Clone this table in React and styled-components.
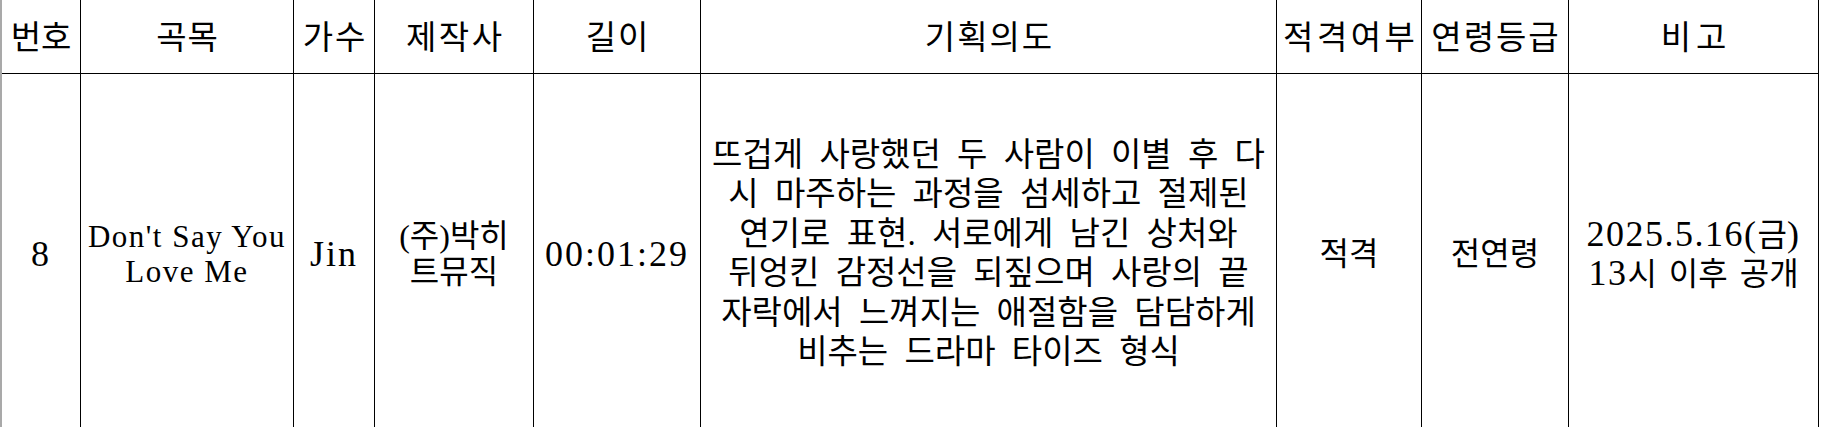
import React from "react";
import styled, { createGlobalStyle } from "styled-components";

const GlobalStyle = createGlobalStyle`
  html, body {
    margin: 0;
    padding: 0;
    overflow: hidden;
    background: #ffffff;
  }
  body {
    font-family: "Liberation Serif", "Noto Sans CJK KR", serif;
    color: #000000;
  }
`;

const COLUMNS = [79, 213, 81, 159, 167, 576, 145, 147, 250];

const Frame = styled.div`
  width: 1822px;
  height: 427px;
  box-sizing: border-box;
  border-left: 2px solid #a9a9a9;
  padding-right: 3px;
  overflow: hidden;
  background: #ffffff;
`;

const Table = styled.div`
  display: grid;
  grid-template-columns: ${COLUMNS.map((c) => `${c}px`).join(" ")};
  grid-template-rows: 74px 360px;
`;

const Cell = styled.div`
  box-sizing: border-box;
  border-right: 1px solid #000000;
  display: flex;
  flex-direction: column;
  align-items: center;
  justify-content: center;
  text-align: center;
  white-space: nowrap;
  font-family: "Liberation Serif", "Noto Sans CJK KR", serif;
  font-size: 32px;
  font-weight: 400;
  color: #000000;
`;

const HeadCell = styled(Cell)`
  border-bottom: 1px solid #000000;
  font-size: 33px;
  line-height: 40px;
  letter-spacing: ${(p) => (p.$ls === undefined ? 2 : p.$ls)}px;
  padding-top: 3px;
  padding-left: ${(p) => (p.$ls === undefined ? 2 : p.$ls)}px;
`;

const BodyCell = styled(Cell)`
  font-size: ${(p) => p.$size || 32}px;
  line-height: ${(p) => p.$lh || 38}px;
  word-spacing: ${(p) => p.$ws || 0}px;
`;

const Line = styled.span`
  display: block;
`;

const Latin = styled.span`
  font-family: "Liberation Serif", serif;
  font-size: ${(p) => p.$size || 36}px;
  letter-spacing: ${(p) => (p.$ls === undefined ? 2 : p.$ls)}px;
`;

const HEADERS = [
  { label: "번호", ls: 0 },
  { label: "곡목", ls: 1 },
  { label: "가수", ls: 2 },
  { label: "제작사", ls: 2.5 },
  { label: "길이", ls: 2 },
  { label: "기획의도", ls: 2 },
  { label: "적격여부", ls: 3.5 },
  { label: "연령등급", ls: 2 },
  { label: "비고", ls: 5 },
];

const PLAN = [
  "뜨겁게 사랑했던 두 사람이 이별 후 다",
  "시 마주하는 과정을 섬세하고 절제된",
  "연기로 표현. 서로에게 남긴 상처와",
  "뒤엉킨 감정선을 되짚으며 사랑의 끝",
  "자락에서 느껴지는 애절함을 담담하게",
  "비추는 드라마 타이즈 형식",
];

export default function App() {
  return (
    <>
      <GlobalStyle />
      <Frame>
        <Table>
          {HEADERS.map((h) => (
            <HeadCell key={h.label} $ls={h.ls}>
              {h.label}
            </HeadCell>
          ))}
          <BodyCell>
            <Latin>8</Latin>
          </BodyCell>
          <BodyCell $lh={34}>
            <Line>
              <Latin $size={31} $ls={1.5}>Don't Say You</Latin>
            </Line>
            <Line>
              <Latin $size={31} $ls={1.5}>Love Me</Latin>
            </Line>
          </BodyCell>
          <BodyCell>
            <Latin>Jin</Latin>
          </BodyCell>
          <BodyCell $lh={36}>
            <Line>(주)박히</Line>
            <Line>트뮤직</Line>
          </BodyCell>
          <BodyCell>
            <Latin>00:01:29</Latin>
          </BodyCell>
          <BodyCell $size={33} $lh={39.5} $ws={8}>
            {PLAN.map((l) => (
              <Line key={l}>{l}</Line>
            ))}
          </BodyCell>
          <BodyCell>적격</BodyCell>
          <BodyCell>전연령</BodyCell>
          <BodyCell $lh={38} $ws={4}>
            <Line>
              <Latin $ls={1.5}>2025.5.16(</Latin>금<Latin $ls={1.5}>)</Latin>
            </Line>
            <Line>
              <Latin $ls={1.5}>13</Latin>시 이후 공개
            </Line>
          </BodyCell>
        </Table>
      </Frame>
    </>
  );
}
